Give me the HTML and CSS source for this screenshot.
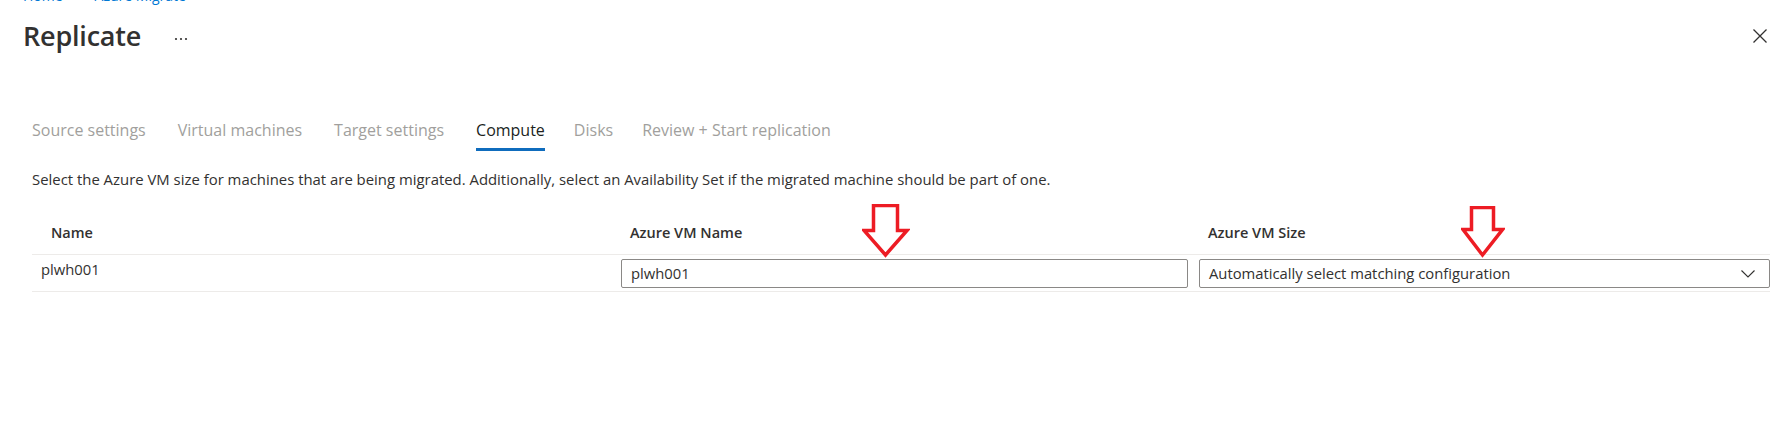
FILE: index.html
```html
<!DOCTYPE html>
<html lang="en">
<head>
<meta charset="utf-8">
<title>Replicate</title>
<link rel="stylesheet" href="styles.css">
</head>
<body>
<div class="blade">
  <nav class="breadcrumb">
    <a class="crumb">Home</a><span class="sep">&gt;</span><a class="crumb">Azure Migrate</a><span class="sep">&gt;</span>
  </nav>
  <header class="title-row">
    <h1 class="title">Replicate</h1>
    <span class="more" aria-label="More">
      <svg width="14" height="4" viewBox="0 0 14 4"><circle cx="2" cy="2" r="1.1" fill="#323130"/><circle cx="7" cy="2" r="1.1" fill="#323130"/><circle cx="12" cy="2" r="1.1" fill="#323130"/></svg>
    </span>
    <span class="spacer"></span>
    <button class="close" aria-label="Close">
      <svg width="14" height="14" viewBox="0 0 14 14"><path d="M0.5 0.5 L13.5 13.5 M13.5 0.5 L0.5 13.5" stroke="#323130" stroke-width="1.3" fill="none"/></svg>
    </button>
  </header>

  <div class="tabs">
    <span class="tab wide">Source settings</span>
    <span class="tab wide">Virtual machines</span>
    <span class="tab wide">Target settings</span>
    <span class="tab active">Compute</span>
    <span class="tab">Disks</span>
    <span class="tab">Review + Start replication</span>
  </div>

  <p class="desc">Select the Azure VM size for machines that are being migrated. Additionally, select an Availability Set if the migrated machine should be part of one.</p>

  <div class="grid">
    <div class="row head">
      <div class="cell th">Name</div>
      <div class="cell th">Azure VM Name</div>
      <div class="cell th">Azure VM Size</div>
    </div>
    <div class="row body">
      <div class="cell td name">plwh001</div>
      <div class="cell td"><div class="input">plwh001</div></div>
      <div class="cell td"><div class="input select"><span>Automatically select matching configuration</span>
        <svg width="14" height="8" viewBox="0 0 14 8"><path d="M0.5 0.5 L7 7 L13.5 0.5" stroke="#323130" stroke-width="1.1" fill="none"/></svg></div></div>
    </div>
  </div>

  <svg class="arrow arrow-1" width="48" height="54" viewBox="0 0 48 54"><path d="M11.5 1.5 H35.5 V26.5 H45 L23.5 51 L2 26.5 H11.5 Z" fill="#fff" stroke="#ed1c24" stroke-width="3.5" stroke-linejoin="miter"/></svg>
  <svg class="arrow arrow-2" width="44" height="52" viewBox="0 0 44 52"><path d="M10.5 1.5 H32.5 V23.5 H41.5 L21.5 49 L2 23.5 H10.5 Z" fill="#fff" stroke="#ed1c24" stroke-width="3.5" stroke-linejoin="miter"/></svg>
</div>
</body>
</html>
```

FILE: styles.css
```css
* { box-sizing: border-box; }
html, body { margin: 0; padding: 0; background: #fff; }
body {
  font-family: "Open Sans", "Noto Sans", "Liberation Sans", sans-serif;
  color: #323130;
  overflow: hidden;
}
.blade {
  position: relative;
  display: flow-root;
  width: 1779px;
  height: 441px;
  padding: 0 10px 0 32px;
}
.breadcrumb {
  display: flex;
  align-items: baseline;
  margin: -14px 0 0 -9px;
  height: 20px;
  font-size: 14px;
  line-height: 20px;
  color: #0078d4;
}
.crumb { color: #0078d4; }
.sep { color: #a19f9d; margin: 0 12px; }
.title-row {
  display: flex;
  align-items: center;
  height: 40px;
  margin: 12px 0 0 -9px;
}
.title {
  margin: -4px 0 0;
  font-size: 27px;
  font-weight: 600;
  line-height: 36px;
  color: #323130;
  letter-spacing: -0.2px;
}
.more { display: flex; margin-left: 33px; margin-top: 2px; }
.spacer { flex: 1; }
.close {
  display: flex;
  border: 0;
  background: none;
  padding: 0;
  margin-right: 2px;
  margin-top: -4px;
}
.tabs {
  display: flex;
  gap: 29px;
  margin-top: 58px;
  height: 35px;
}
.tab {
  font-size: 16px;
  line-height: 20px;
  color: #a19f9d;
  padding-top: 4px;
  height: 35px;
  white-space: nowrap;
}
.tab.wide { margin-right: 3px; }
.tab.active {
  color: #201f1e;
  border-bottom: 3px solid #0f6cbd;
}
.desc {
  margin: 18px 0 0;
  font-size: 14.9px;
  line-height: 20px;
  color: #323130;
}
.grid {
  margin-top: 21px;
  width: 1738px;
}
.row {
  display: grid;
  grid-template-columns: 579px 578px 581px;
}
.row.head {
  height: 45px;
  border-bottom: 1px solid #edebe9;
  align-items: center;
}
.row.body {
  height: 37px;
  border-bottom: 1px solid #edebe9;
  padding-top: 4px;
}
.th {
  font-size: 14.5px;
  font-weight: 600;
  padding-left: 19px;
  color: #323130;
}
.td { padding-left: 10px; font-size: 14.8px; }
.td.name { padding-left: 9px; line-height: 20px; }
.input {
  height: 29px;
  border: 1px solid #8a8886;
  border-radius: 2px;
  padding: 0 9px;
  font-size: 14.8px;
  line-height: 27px;
  color: #323130;
  width: 567px;
}
.select {
  display: flex;
  align-items: center;
  justify-content: space-between;
  width: 571px;
  padding-right: 14px;
}
.arrow { position: absolute; }
.arrow-1 { left: 862px; top: 204px; }
.arrow-2 { left: 1461px; top: 206px; }
```
